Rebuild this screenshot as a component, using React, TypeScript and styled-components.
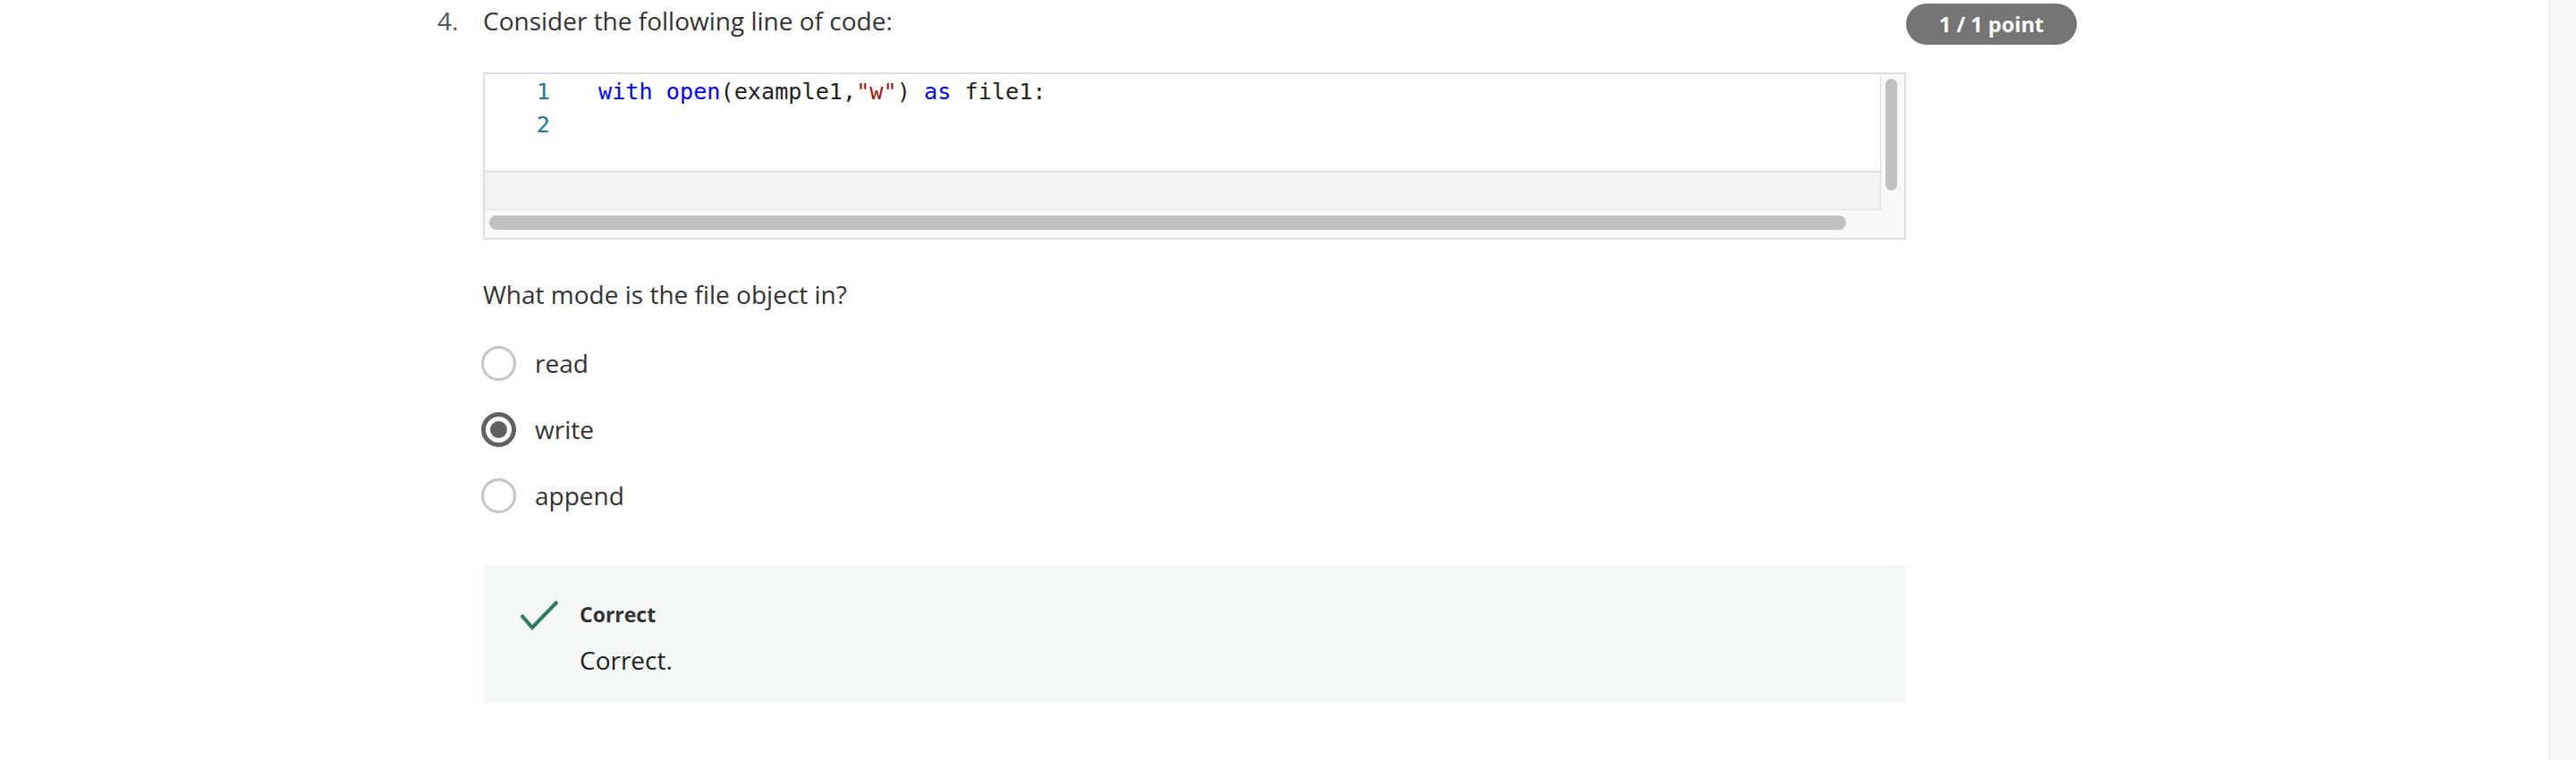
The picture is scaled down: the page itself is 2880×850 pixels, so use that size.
import styled, { createGlobalStyle } from "styled-components";

const GlobalStyle = createGlobalStyle`
  html, body {
    margin: 0;
    padding: 0;
    background: #ffffff;
  }
  body {
    font-family: "Open Sans", "Noto Sans", Arial, sans-serif;
    color: #1f1f1f;
  }
`;

const Page = styled.div`
  display: flex;
  height: 850px;
  overflow: hidden;
`;

const Main = styled.main`
  flex: 1;
  padding-top: 2px;
`;

const PageScroll = styled.div`
  width: 29px;
  border-left: 1px solid #e6e6e6;
  background: #f8f8f8;
`;

const Question = styled.section`
  display: grid;
  grid-template-columns: 51px 1591px 191px;
  align-items: start;
  margin-left: 489px;
`;

const Number = styled.div`
  font-size: 28px;
  line-height: 42px;
  color: #545454;
`;

const Prompt = styled.div`
  font-size: 28px;
  line-height: 42px;
  color: #333333;
`;

const Badge = styled.div`
  margin-top: 2px;
  height: 46px;
  border-radius: 23px;
  background: #757575;
  color: #ffffff;
  font-weight: 700;
  font-size: 23.5px;
  display: flex;
  align-items: center;
  justify-content: center;
`;

const Body = styled.div`
  grid-column: 2;
  margin-top: 31px;
`;

const CodeFrame = styled.div`
  box-sizing: border-box;
  height: 187px;
  border: 2px solid #dedede;
  background: #f9f9f9;
  display: grid;
  grid-template-columns: 1fr 26px;
  grid-template-rows: 1fr 31px;
`;

const Viewport = styled.div`
  background: #f3f3f3;
  border-right: 1px solid #dcdcdc;
  border-bottom: 1px solid #dcdcdc;
`;

const Editor = styled.div`
  height: 110px;
  background: #fffffe;
  border-bottom: 2px solid #dcdcdc;
  padding-top: 1px;
  box-sizing: border-box;
  font-family: "DejaVu Sans Mono", "Liberation Mono", monospace;
  font-size: 25.2px;
  line-height: 37px;
`;

const Line = styled.div`
  display: flex;
  white-space: pre;
`;

const Gutter = styled.span`
  width: 73px;
  padding-right: 54px;
  text-align: right;
  color: #237893;
`;

const Kw = styled.span`
  color: #0000ff;
`;

const Str = styled.span`
  color: #a31515;
`;

const VTrack = styled.div`
  grid-row: 1 / span 2;
  grid-column: 2;
  padding: 5px 0 0 5px;
`;

const VThumb = styled.div`
  width: 13px;
  height: 125px;
  border-radius: 7px;
  background: #c1c1c1;
`;

const HTrack = styled.div`
  padding: 6px 0 0 5px;
`;

const HThumb = styled.div`
  width: 1517px;
  height: 16px;
  border-radius: 8px;
  background: #c1c1c1;
`;

const Ask = styled.p`
  margin: 40px 0 0;
  font-size: 28px;
  line-height: 42px;
  color: #333333;
`;

const Options = styled.div`
  margin-top: 19px;
`;

const Option = styled.label`
  display: flex;
  align-items: center;
  gap: 21px;
  height: 74px;
  font-size: 28px;
  color: #333333;
`;

const Radio = styled.span<{ $checked?: boolean }>`
  box-sizing: border-box;
  width: 39px;
  height: 39px;
  margin-left: -2px;
  border-radius: 50%;
  border: ${(p) => (p.$checked ? "5px solid #616161" : "3px solid #c4c4c4")};
  display: flex;
  align-items: center;
  justify-content: center;

  &::after {
    content: "";
    display: ${(p) => (p.$checked ? "block" : "none")};
    width: 19px;
    height: 19px;
    border-radius: 50%;
    background: #616161;
  }
`;

const Feedback = styled.div`
  margin-top: 41px;
  background: #f3f8f6;
  display: flex;
  gap: 22px;
  padding: 37px 40px 27px;
`;

const CheckIcon = styled.svg`
  flex: none;
  margin-top: 1px;
`;

const FeedbackText = styled.div`
  display: flex;
  flex-direction: column;
  gap: 12px;
`;

const FeedbackTitle = styled.div`
  font-weight: 700;
  font-size: 23px;
  line-height: 36px;
  color: #333333;
`;

const FeedbackBody = styled.div`
  font-size: 28px;
  line-height: 42px;
  color: #1f1f1f;
`;

const options = [
  { label: "read", checked: false },
  { label: "write", checked: true },
  { label: "append", checked: false },
];

export default function App() {
  return (
    <>
      <GlobalStyle />
      <Page>
        <Main>
          <Question>
            <Number>4.</Number>
            <Prompt>Consider the following line of code:</Prompt>
            <Badge>1 / 1 point</Badge>
            <Body>
              <CodeFrame>
                <Viewport>
                  <Editor>
                    <Line>
                      <Gutter>1</Gutter>
                      <span>
                        <Kw>with</Kw> <Kw>open</Kw>(example1,<Str>"w"</Str>) <Kw>as</Kw> file1:
                      </span>
                    </Line>
                    <Line>
                      <Gutter>2</Gutter>
                    </Line>
                  </Editor>
                </Viewport>
                <VTrack>
                  <VThumb />
                </VTrack>
                <HTrack>
                  <HThumb />
                </HTrack>
              </CodeFrame>
              <Ask>What mode is the file object in?</Ask>
              <Options>
                {options.map((o) => (
                  <Option key={o.label}>
                    <Radio $checked={o.checked} />
                    {o.label}
                  </Option>
                ))}
              </Options>
              <Feedback>
                <CheckIcon width="46" height="36" viewBox="0 0 46 36">
                  <path d="M3 18 L15 32 L43 3" fill="none" stroke="#2f7d55" strokeWidth="4" />
                </CheckIcon>
                <FeedbackText>
                  <FeedbackTitle>Correct</FeedbackTitle>
                  <FeedbackBody>Correct.</FeedbackBody>
                </FeedbackText>
              </Feedback>
            </Body>
          </Question>
        </Main>
        <PageScroll />
      </Page>
    </>
  );
}
